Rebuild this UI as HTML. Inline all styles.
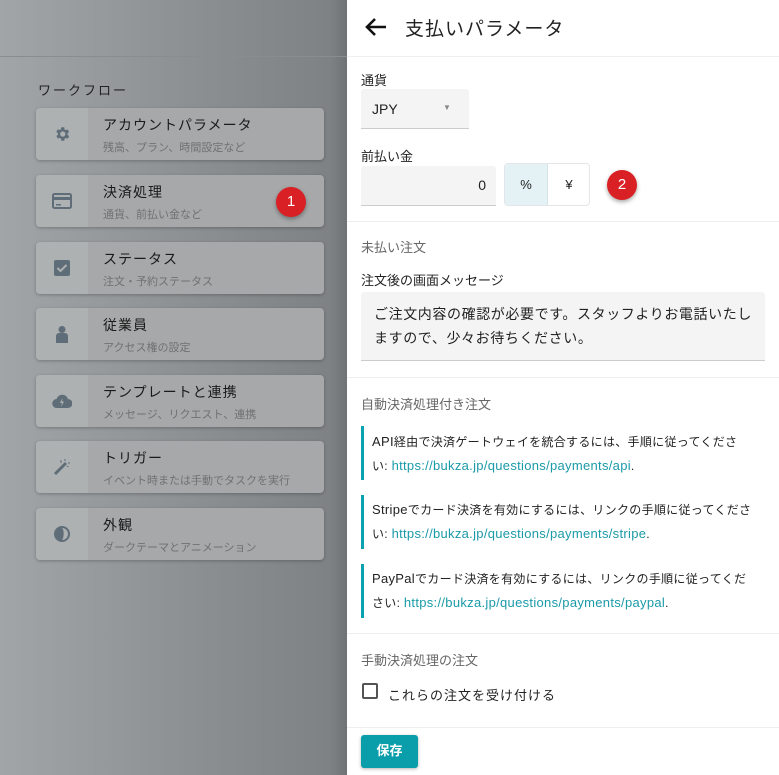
<!DOCTYPE html>
<html><head><meta charset="utf-8"><style>
*{box-sizing:border-box;margin:0;padding:0}
body{width:779px;height:775px;overflow:hidden;font-family:"Liberation Sans","Noto Sans CJK JP",sans-serif;position:relative;background:#fff}
#left{position:absolute;left:0;top:0;width:347px;height:775px;background:linear-gradient(90deg,#a1a5a8 0%,#8a8e90 60%,#7e8284 95%,#6f7375 100%)}
#left .hl{position:absolute;left:0;top:56px;width:347px;height:1px;background:#8a8d8f}
.wf{position:absolute;left:38px;top:80px;font-size:13px;color:#222;letter-spacing:2px}
.card{position:absolute;left:36px;width:288px;height:52px;border-radius:4px;background:#a6a8a9;box-shadow:0 1px 3px rgba(0,0,0,.25);overflow:hidden}
.card .ic{position:absolute;left:0;top:0;width:52px;height:100%;background:#aeb1b2;display:flex;align-items:center;justify-content:center}
.card .t{position:absolute;left:67px;top:7px;font-size:14px;color:#1a1a1a;letter-spacing:1px}
.card .s{position:absolute;left:67px;top:31px;font-size:11px;color:#6f7173}
.badge{position:absolute;border-radius:50%;background:#d92025;color:#fff;font-size:15px;text-align:center;box-shadow:0 2px 4px rgba(0,0,0,.35)}
#right{position:absolute;left:347px;top:0;width:432px;height:775px;background:#fff}
.hdr{height:57px;border-bottom:1px solid #eee;position:relative}
.hdr .t{position:absolute;left:58px;top:14px;font-size:19px;color:#222;letter-spacing:1px}
.lbl{position:absolute;font-size:13px;color:#222}
.sec{position:absolute;font-size:13px;color:#666}
.hr{position:absolute;left:0;width:432px;height:1px;background:#eee}
.field{position:absolute;background:#f4f4f4;border-bottom:1px solid #ccc;border-radius:3px 3px 0 0}
.note{position:absolute;left:14px;width:405px;border-left:3px solid #0aa2b0;padding-left:8px;font-size:12px;color:#222;line-height:23px;white-space:nowrap;letter-spacing:.3px}
.note a{color:#1b9aa8;text-decoration:none;font-size:13px;letter-spacing:.3px}
.note b{font-weight:normal;font-size:13px}
</style></head><body>
<div id="left"><div class="hl"></div>
<div class="wf">ワークフロー</div>
<div class="card" style="top:108px"><div class="ic"><svg width="18" height="18" viewBox="0 0 24 24"><path fill="#5f6d78" d="M19.4 13a7.5 7.5 0 000-2l2.1-1.6-2-3.5-2.5 1a7 7 0 00-1.7-1L15 3h-4l-.4 2.7a7 7 0 00-1.7 1l-2.5-1-2 3.5L6.6 11a7.5 7.5 0 000 2l-2.1 1.6 2 3.5 2.5-1a7 7 0 001.7 1L11 21h4l.4-2.7a7 7 0 001.7-1l2.5 1 2-3.5zM13 15.5a3.5 3.5 0 110-7 3.5 3.5 0 010 7z"/></svg></div><div class="t">アカウントパラメータ</div><div class="s">残高、プラン、時間設定など</div></div>
<div class="card" style="top:175px"><div class="ic"><svg width="20" height="16" viewBox="0 0 20 16"><rect x="1" y="1" width="18" height="14" rx="1.5" fill="none" stroke="#5f6d78" stroke-width="2"/><rect x="1" y="4" width="18" height="3" fill="#5f6d78"/><rect x="4" y="11" width="5" height="1.5" fill="#5f6d78"/></svg></div><div class="t">決済処理</div><div class="s">通貨、前払い金など</div></div>
<div class="badge" style="left:276px;top:187px;width:30px;height:30px;line-height:30px">1</div>
<div class="card" style="top:242px"><div class="ic"><svg width="16" height="16" viewBox="0 0 16 16"><rect width="16" height="16" rx="2" fill="#5f6d78"/><path d="M3.5 8l3 3 6-6" stroke="#aeb1b2" stroke-width="2" fill="none"/></svg></div><div class="t">ステータス</div><div class="s">注文・予約ステータス</div></div>
<div class="card" style="top:308px"><div class="ic"><svg width="14" height="18" viewBox="0 0 14 18"><circle cx="7" cy="4.5" r="3.5" fill="#5f6d78"/><path d="M1 18V11a3 3 0 013-3h6a3 3 0 013 3v7z" fill="#5f6d78"/></svg></div><div class="t">従業員</div><div class="s">アクセス権の設定</div></div>
<div class="card" style="top:375px"><div class="ic"><svg width="20" height="14" viewBox="0 0 20 14"><path d="M5 14a4.5 4.5 0 01-.5-9A6 6 0 0116 5a4.5 4.5 0 010 9z" fill="#5f6d78"/><path d="M10.5 4l-2.5 5h2l-1 4 3-5.5h-2z" fill="#aeb1b2"/></svg></div><div class="t">テンプレートと連携</div><div class="s">メッセージ、リクエスト、連携</div></div>
<div class="card" style="top:441px"><div class="ic"><svg width="18" height="18" viewBox="0 0 18 18"><path d="M2 16L13 5" stroke="#5f6d78" stroke-width="3"/><path d="M8 2v3M12 1v2M15 5h2M14 8l1.5 1" stroke="#5f6d78" stroke-width="1"/></svg></div><div class="t">トリガー</div><div class="s">イベント時または手動でタスクを実行</div></div>
<div class="card" style="top:508px"><div class="ic"><svg width="18" height="18" viewBox="0 0 18 18"><circle cx="9" cy="9" r="8" fill="#5f6d78"/><path d="M9 3a6 6 0 010 12c2-2 2.5-10 0-12z" fill="#aeb1b2"/></svg></div><div class="t">外観</div><div class="s">ダークテーマとアニメーション</div></div>
</div>
<div id="right">
<div class="hdr"><svg style="position:absolute;left:18px;top:17px" width="22" height="20" viewBox="0 0 22 20"><path d="M21 10H3M10 2L2 10l8 8" stroke="#111" stroke-width="2.6" fill="none"/></svg><div class="t">支払いパラメータ</div></div>
<div class="lbl" style="left:14px;top:70px">通貨</div>
<div class="field" style="left:14px;top:89px;width:108px;height:40px"><span style="position:absolute;left:11px;top:12px;font-size:14px;color:#222">JPY</span><span style="position:absolute;left:82px;top:14px;font-size:8px;color:#888">▼</span></div>
<div class="lbl" style="left:14px;top:146px">前払い金</div>
<div class="field" style="left:14px;top:166px;width:135px;height:40px"><span style="position:absolute;right:10px;top:11px;font-size:14px;color:#222">0</span></div>
<div style="position:absolute;left:157px;top:163px;width:86px;height:43px;border:1px solid #e2e6e8;border-radius:4px;overflow:hidden;font-size:13px;color:#222"><div style="position:absolute;left:0;top:0;width:43px;height:100%;background:#e4f2f6;border-right:1px solid #d6e4e8;text-align:center;line-height:41px">%</div><div style="position:absolute;left:43px;top:0;width:42px;text-align:center;line-height:41px">¥</div></div>
<div class="badge" style="left:260px;top:170px;width:30px;height:30px;line-height:30px">2</div>
<div class="hr" style="top:221px"></div>
<div class="sec" style="left:14px;top:237px">未払い注文</div>
<div class="lbl" style="left:14px;top:270px">注文後の画面メッセージ</div>
<div class="field" style="left:14px;top:292px;width:404px;height:69px;padding:10px 13px;font-size:14px;color:#222;line-height:24px;letter-spacing:.6px;white-space:nowrap">ご注文内容の確認が必要です。スタッフよりお電話いたし<br>ますので、少々お待ちください。</div>
<div class="hr" style="top:377px"></div>
<div class="sec" style="left:14px;top:394px">自動決済処理付き注文</div>
<div class="note" style="top:426px;height:54px;padding-top:4px"><b>API</b>経由で決済ゲートウェイを統合するには、手順に従ってくださ<br>い: <a>https://bukza.jp/questions/payments/api</a>.</div>
<div class="note" style="top:495px;height:54px;padding-top:3px"><b>Stripe</b>でカード決済を有効にするには、リンクの手順に従ってくださ<br>い: <a>https://bukza.jp/questions/payments/stripe</a>.</div>
<div class="note" style="top:564px;height:54px;padding-top:3px"><b>PayPal</b>でカード決済を有効にするには、リンクの手順に従ってくだ<br>さい: <a>https://bukza.jp/questions/payments/paypal</a>.</div>
<div class="hr" style="top:633px"></div>
<div class="sec" style="left:14px;top:650px">手動決済処理の注文</div>
<div style="position:absolute;left:15px;top:683px;width:16px;height:16px;border:2px solid #555;border-radius:2px"></div>
<div class="lbl" style="left:41px;top:685px;letter-spacing:1px">これらの注文を受け付ける</div>
<div class="hr" style="top:727px"></div>
<div style="position:absolute;left:14px;top:735px;width:57px;height:33px;background:#0a9daa;border-radius:3px;color:#fff;font-size:13px;font-weight:bold;text-align:center;line-height:31px;box-shadow:0 1px 3px rgba(0,0,0,.3)">保存</div>
</div>
</body></html>
